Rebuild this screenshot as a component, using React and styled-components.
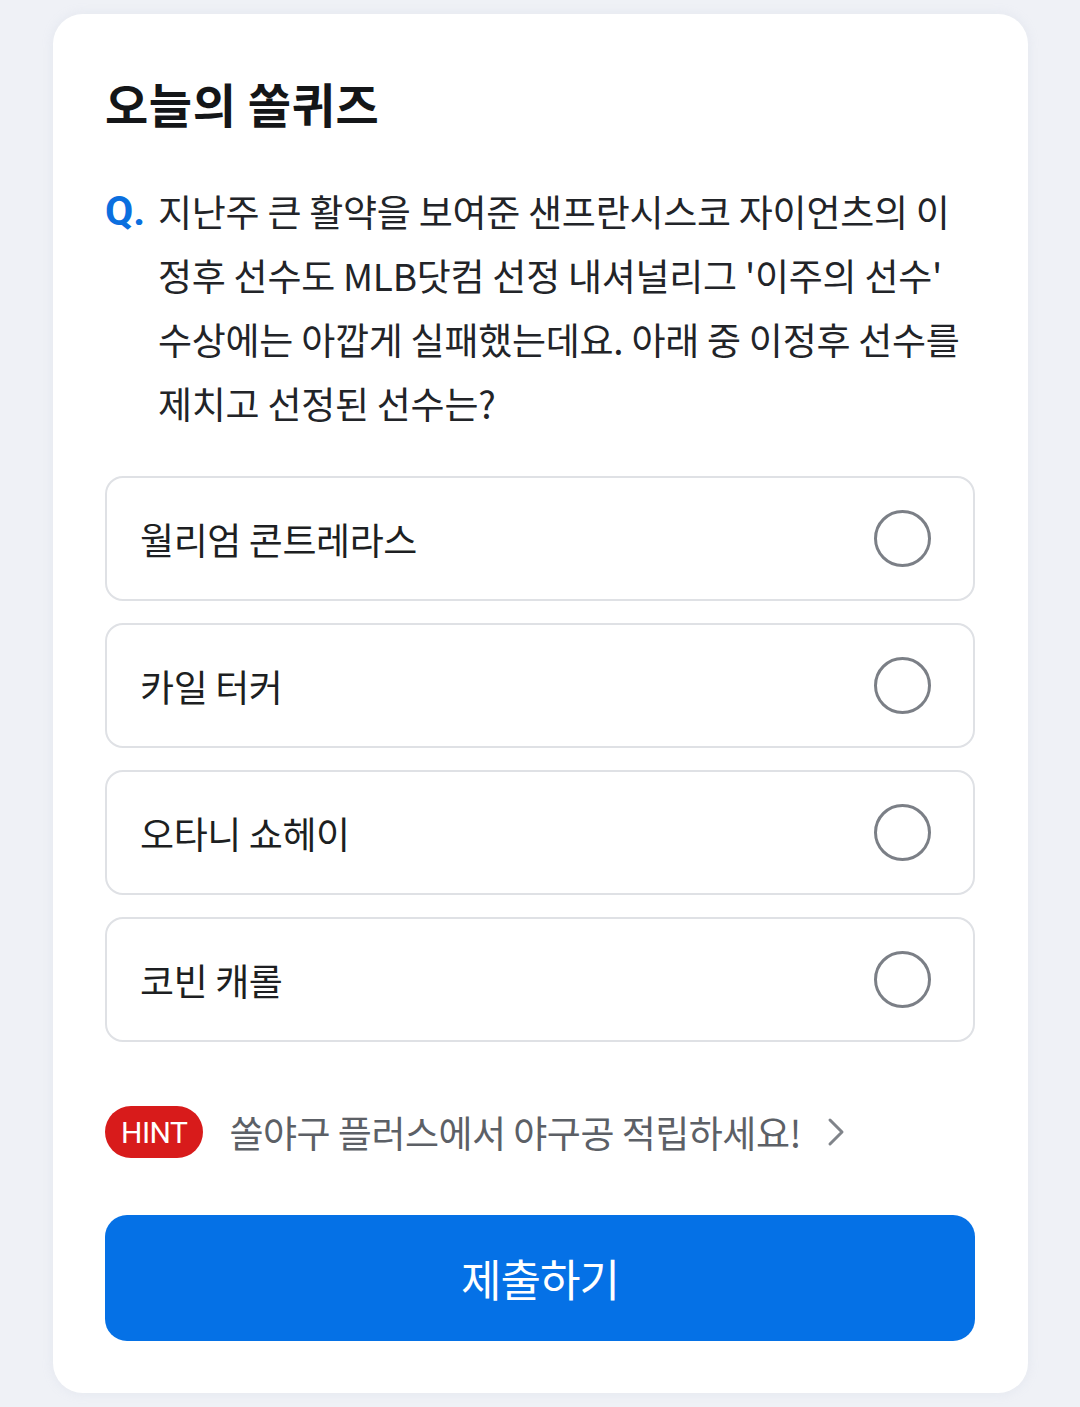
import { useState } from 'react'
import { styled, createGlobalStyle } from 'styled-components'

const GlobalStyle = createGlobalStyle`
  * { box-sizing: border-box; }
  body {
    margin: 0;
    background: #eff1f6;
    font-family: 'Noto Sans CJK KR', 'Noto Sans', sans-serif;
  }
`

const Page = styled.div`
  padding: 14px 52px 14px 53px;
`

const Card = styled.section`
  background: #fff;
  border-radius: 30px;
  box-shadow: 0 0 12px rgba(180, 190, 210, 0.18);
  padding: 61px 53px 52px 52px;
  display: flex;
  flex-direction: column;
`

const Title = styled.h2`
  margin: 0;
  font-size: 47px;
  line-height: 56px;
  font-weight: 700;
  color: #141618;
  letter-spacing: 0.6px;
`

const Question = styled.div`
  display: flex;
  margin-top: 48px;
  font-size: 37px;
  line-height: 64px;
  color: #222428;
  letter-spacing: -0.25px;
`

const QMark = styled.span`
  flex: none;
  width: 53px;
  color: #0b6fdf;
  font-weight: 700;
  font-family: 'Roboto', sans-serif;
  font-size: 41px;
  letter-spacing: 0;
`

const QText = styled.p`
  margin: 0;
  white-space: nowrap;
`

const Options = styled.div`
  margin-top: 41px;
  display: flex;
  flex-direction: column;
  gap: 22px;
`

const Option = styled.label`
  height: 125px;
  border: 2px solid ${({ $checked }) => ($checked ? '#0b6fdf' : '#dfe1e5')};
  border-radius: 18px;
  display: flex;
  align-items: center;
  justify-content: space-between;
  padding: 0 42px 0 33px;
  font-size: 37px;
  color: #1d1f22;
  letter-spacing: -0.4px;
  cursor: pointer;
`

const Radio = styled.span`
  width: 57px;
  height: 57px;
  border-radius: 50%;
  border: 3px solid ${({ $checked }) => ($checked ? '#0b6fdf' : '#7b7f86')};
  display: flex;
  align-items: center;
  justify-content: center;
  &::after {
    content: '';
    width: 29px;
    height: 29px;
    border-radius: 50%;
    background: ${({ $checked }) => ($checked ? '#0b6fdf' : 'transparent')};
  }
`

const HintRow = styled.div`
  margin-top: 63px;
  display: flex;
  align-items: center;
  gap: 26px;
  color: #5c6066;
  font-size: 37px;
  letter-spacing: -0.5px;
`

const Badge = styled.span`
  height: 52px;
  padding: 0 16px;
  border-radius: 26px;
  background: #d81b1b;
  color: #fff;
  font-family: 'Roboto', sans-serif;
  font-size: 30px;
  letter-spacing: -0.5px;
  display: flex;
  align-items: center;
`

const Chevron = styled.svg`
  width: 20px;
  height: 30px;
  margin-left: -1px;
`

const Submit = styled.button`
  margin-top: 56px;
  height: 126px;
  border: none;
  border-radius: 22px;
  background: #0571e6;
  color: #fff;
  font-family: inherit;
  font-size: 44px;
  letter-spacing: -1px;
  cursor: pointer;
`

const choices = ['월리엄 콘트레라스', '카일 터커', '오타니 쇼헤이', '코빈 캐롤']

export default function App() {
  const [picked, setPicked] = useState(null)
  return (
    <>
      <GlobalStyle />
      <Page>
        <Card>
          <Title>오늘의 쏠퀴즈</Title>
          <Question>
            <QMark>Q.</QMark>
            <QText>
              지난주 큰 활약을 보여준 샌프란시스코 자이언츠의 이<br />
              정후 선수도 MLB닷컴 선정 내셔널리그 '이주의 선수'<br />
              수상에는 아깝게 실패했는데요. 아래 중 이정후 선수를<br />
              제치고 선정된 선수는?
            </QText>
          </Question>
          <Options>
            {choices.map((c, i) => (
              <Option key={c} $checked={picked === i} onClick={() => setPicked(i)}>
                {c}
                <Radio $checked={picked === i} />
              </Option>
            ))}
          </Options>
          <HintRow>
            <Badge>HINT</Badge>
            쏠야구 플러스에서 야구공 적립하세요!
            <Chevron viewBox="0 0 20 30" fill="none">
              <path d="M4 3l12 12L4 27" stroke="#80848a" strokeWidth="3" strokeLinecap="round" strokeLinejoin="round" />
            </Chevron>
          </HintRow>
          <Submit>제출하기</Submit>
        </Card>
      </Page>
    </>
  )
}
